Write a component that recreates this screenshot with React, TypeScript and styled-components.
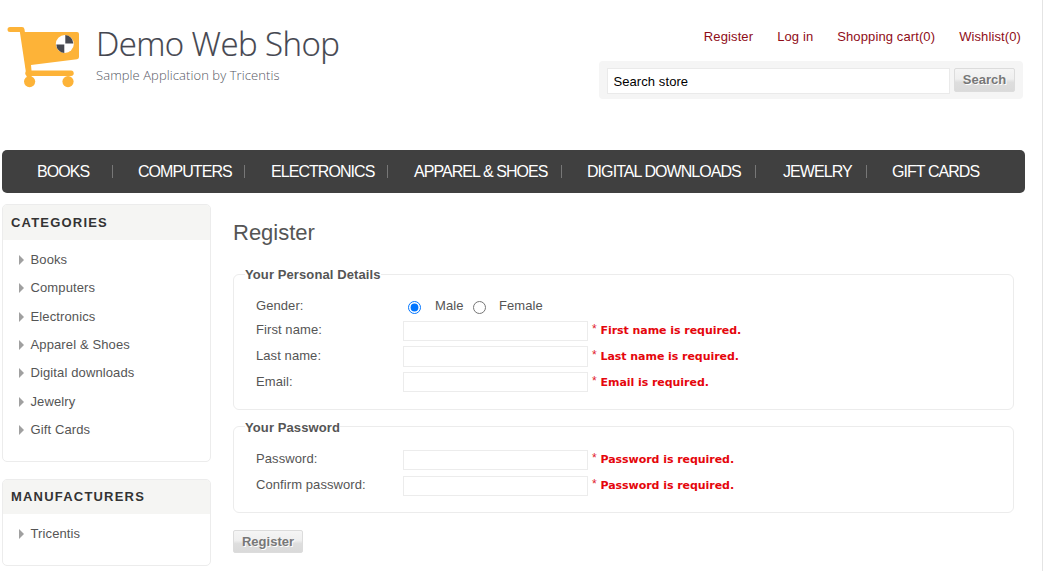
import React from 'react';
import styled, { createGlobalStyle } from 'styled-components';

const GlobalStyle = createGlobalStyle`
  *, *::before, *::after { box-sizing: border-box; }
  body { margin: 0; background: #fff; overflow: hidden; }
  ul { list-style: none; margin: 0; padding: 0; }
  a { color: inherit; text-decoration: none; }
`;

const Page = styled.div`
  width: 1043px;
  height: 571px;
  padding-left: 2px;
  border-right: 1px solid #e4e4e4;
  background: #fff;
  color: #555;
  font: 13px/16px "Liberation Sans", Arial, sans-serif;
  letter-spacing: 0.08px;
  overflow: hidden;
`;

const Header = styled.header`
  display: flex;
  justify-content: space-between;
  width: 1021px;
  height: 150px;
`;

const Logo = styled.a`
  display: flex;
  padding: 24px 0 0 5px;
  height: 96px;
`;

const LogoText = styled.div`
  display: flex;
  flex-direction: column;
  padding-left: 14px;
  font-family: "Open Sans", sans-serif;
  font-weight: 300;
  white-space: nowrap;
`;

const LogoName = styled.span`
  font-size: 33px;
  line-height: 40px;
  letter-spacing: -0.58px;
  color: #44464f;
  -webkit-text-stroke: 0.2px #44464f;
`;

const LogoTagline = styled.span`
  margin-top: 2px;
  font-size: 13px;
  line-height: 18px;
  letter-spacing: 0.08px;
  color: #55575f;
`;

const HeaderTools = styled.div`
  display: flex;
  flex-direction: column;
  align-items: flex-end;
  padding-top: 29px;
`;

const HeaderLinks = styled.nav`
  display: flex;
  gap: 24px;
  padding-right: 2px;
  color: #8f0d18;
  letter-spacing: 0.11px;
  white-space: nowrap;
`;

const SearchBox = styled.form`
  display: flex;
  align-items: flex-start;
  gap: 4px;
  width: 424px;
  height: 38px;
  margin-top: 16px;
  padding: 7px 8px;
  border-radius: 4px;
  background: #f5f5f5;
`;

const SearchInput = styled.input`
  width: 343px;
  height: 26px;
  padding: 1px 5.5px 0;
  border: 1px solid #eaeaea;
  background: #fff;
  color: #000;
  font: 13px "Liberation Sans", Arial, sans-serif;
  letter-spacing: 0.08px;
  outline: none;
`;

const Button = styled.button<{ $width: number; $height: number }>`
  width: ${p => p.$width}px;
  height: ${p => p.$height}px;
  padding: 0;
  border: 1px solid #dcdcdc;
  border-radius: 2px;
  background: linear-gradient(#f5f5f5 0%, #efefef 45%, #dedede 60%, #dadada 100%);
  color: #777;
  font: bold 13px/20px "Liberation Sans", Arial, sans-serif;
  letter-spacing: 0;
  text-shadow: 1px 1px #fff;
`;

const Menu = styled.ul`
  display: flex;
  align-items: center;
  width: 1023px;
  height: 43px;
  border-radius: 5px;
  background: #404040;
  color: #fff;
`;

const MenuItem = styled.li<{ $width: number; $indent: number }>`
  width: ${p => p.$width}px;
  height: 13px;
  padding-left: ${p => p.$indent}px;
  border-right: 1px solid #777;
  font-size: 16px;
  line-height: 14px;
  letter-spacing: -0.94px;
  text-transform: uppercase;
  white-space: nowrap;
  &:last-child { border-right: 0; }
`;

const Columns = styled.div`
  display: flex;
  gap: 22px;
  padding-top: 11px;
`;

const Sidebar = styled.aside`
  display: flex;
  flex-direction: column;
  gap: 17px;
  width: 209px;
`;

const Block = styled.section<{ $height: number }>`
  height: ${p => p.$height}px;
  border: 1px solid #ececec;
  border-radius: 5px;
  overflow: hidden;
`;

const BlockTitle = styled.h2<{ $height: number }>`
  height: ${p => p.$height}px;
  margin: 0;
  padding-left: 8px;
  background: #f5f5f3;
  color: #333;
  font-size: 13px;
  line-height: ${p => p.$height}px;
  letter-spacing: 1.2px;
  text-transform: uppercase;
`;

const BlockLinks = styled.ul`
  padding: 5.7px 0 0 16px;
`;

const BlockLink = styled.li`
  display: flex;
  align-items: center;
  gap: 6.5px;
  height: 28.4px;
  letter-spacing: 0.12px;
  white-space: nowrap;
  &::before {
    content: "";
    border-left: 5px solid #a0a0a0;
    border-top: 5px solid transparent;
    border-bottom: 5px solid transparent;
  }
`;

const Main = styled.main`
  width: 781px;
`;

const PageTitle = styled.h1`
  margin: 15px 0 0;
  height: 47px;
  font-size: 22px;
  font-weight: 400;
  line-height: 28px;
  letter-spacing: 0;
`;

const FieldGroup = styled.fieldset<{ $height: number; $gap: number; $top: number }>`
  height: ${p => p.$height}px;
  min-width: 0;
  margin: 0 0 ${p => p.$gap}px;
  padding: ${p => p.$top}px 0 0 22px;
  border: 1px solid #ececec;
  border-radius: 6px;
`;

const GroupTitle = styled.legend<{ $line: number }>`
  height: 16px;
  margin-left: -11px;
  padding: 0;
  font-weight: bold;
  line-height: ${p => p.$line}px;
  letter-spacing: 0.1px;
`;

const Row = styled.div<{ $height?: number }>`
  display: flex;
  height: ${p => p.$height ?? 26}px;
  white-space: nowrap;
`;

const Label = styled.label`
  width: 147px;
  padding-top: 1px;
`;

const RadioLabel = styled.label<{ $gap: number }>`
  display: flex;
  gap: ${p => p.$gap}px;
  margin-right: 4.4px;
  padding: 1px 0 0 5px;
`;

const Radio = styled.input`
  width: 13px;
  height: 13px;
  margin: 3px 0 0;
`;

const TextInput = styled.input<{ $top: number; $height: number }>`
  width: 185px;
  height: ${p => p.$height}px;
  margin: ${p => p.$top}px 4px 0 0;
  border: 1px solid #ececec;
  outline: none;
`;

const Required = styled.span`
  width: 8.5px;
  color: #e2202c;
  font-size: 12px;
  line-height: 17px;
`;

const ErrorText = styled.strong`
  color: #e5060c;
  font: bold 11px/19px "DejaVu Sans", Verdana, sans-serif;
  letter-spacing: -0.05px;
`;

const Cart = () => (
  <svg width="75" height="66" viewBox="7 24 75 66">
    <path d="M10 29.5H22L29 76" fill="none" stroke="#fdb338" strokeWidth="5" strokeLinecap="round" strokeLinejoin="round" />
    <path d="M21 32H77Q79 32 79 34V57Q79 59 77 59.3L31 65L32 76H27Z" fill="#fdb338" />
    <path d="M28 73.2H71" stroke="#fdb338" strokeWidth="5.4" strokeLinecap="round" />
    <circle cx="29.6" cy="81.6" r="5.6" fill="#fdb338" />
    <circle cx="68" cy="81.6" r="5.6" fill="#fdb338" />
    <circle cx="64.8" cy="44" r="9" fill="#fff" />
    <path d="M65.3 43.5V35A8.5 8.5 0 0 1 73.3 43.5ZM64.3 44.5V53A8.5 8.5 0 0 1 56.3 44.5Z" fill="#474951" />
  </svg>
);

const menu: [string, number, number][] = [
  ['Books', 111, 35],
  ['Computers', 132, 25],
  ['Electronics', 143, 26],
  ['Apparel & Shoes', 174, 26],
  ['Digital downloads', 194, 25],
  ['Jewelry', 111, 27],
  ['Gift Cards', 120, 25],
];

const categories = ['Books', 'Computers', 'Electronics', 'Apparel & Shoes', 'Digital downloads', 'Jewelry', 'Gift Cards'];

type FieldProps = { label: string; error: string; type?: string; top?: number; height?: number };

const Field = ({ label, error, type = 'text', top = 0, height = 20 }: FieldProps) => (
  <Row>
    <Label>{label}:</Label>
    <TextInput type={type} aria-label={label} $top={top} $height={height} />
    <Required>*</Required>
    <ErrorText>{error} is required.</ErrorText>
  </Row>
);

export default function App() {
  return (
    <Page>
      <GlobalStyle />
      <Header>
        <Logo>
          <Cart />
          <LogoText>
            <LogoName>Demo Web Shop</LogoName>
            <LogoTagline>Sample Application by Tricentis</LogoTagline>
          </LogoText>
        </Logo>
        <HeaderTools>
          <HeaderLinks>
            <a>Register</a>
            <a>Log in</a>
            <a>Shopping cart(0)</a>
            <a>Wishlist(0)</a>
          </HeaderLinks>
          <SearchBox>
            <SearchInput defaultValue="Search store" />
            <Button type="button" $width={61} $height={24}>Search</Button>
          </SearchBox>
        </HeaderTools>
      </Header>
      <Menu>
        {menu.map(([name, width, indent]) => (
          <MenuItem key={name} $width={width} $indent={indent}>{name}</MenuItem>
        ))}
      </Menu>
      <Columns>
        <Sidebar>
          <Block $height={258}>
            <BlockTitle $height={35}>Categories</BlockTitle>
            <BlockLinks>
              {categories.map(name => <BlockLink key={name}>{name}</BlockLink>)}
            </BlockLinks>
          </Block>
          <Block $height={87}>
            <BlockTitle $height={34}>Manufacturers</BlockTitle>
            <BlockLinks>
              <BlockLink>Tricentis</BlockLink>
            </BlockLinks>
          </Block>
        </Sidebar>
        <Main>
          <PageTitle>Register</PageTitle>
          <FieldGroup $height={144} $gap={8} $top={15}>
            <GroupTitle $line={18}>Your Personal Details</GroupTitle>
            <Row $height={24}>
              <Label>Gender:</Label>
              <RadioLabel $gap={14}><Radio type="radio" name="gender" defaultChecked />Male</RadioLabel>
              <RadioLabel $gap={13}><Radio type="radio" name="gender" />Female</RadioLabel>
            </Row>
            <Field label="First name" error="First name" />
            <Field label="Last name" error="Last name" top={-1} height={21} />
            <Field label="Email" error="Email" top={-1} />
          </FieldGroup>
          <FieldGroup $height={95} $gap={17} $top={16}>
            <GroupTitle $line={20}>Your Password</GroupTitle>
            <Field label="Password" error="Password" type="password" />
            <Field label="Confirm password" error="Password" type="password" />
          </FieldGroup>
          <Button type="button" $width={70} $height={23}>Register</Button>
        </Main>
      </Columns>
    </Page>
  );
}
